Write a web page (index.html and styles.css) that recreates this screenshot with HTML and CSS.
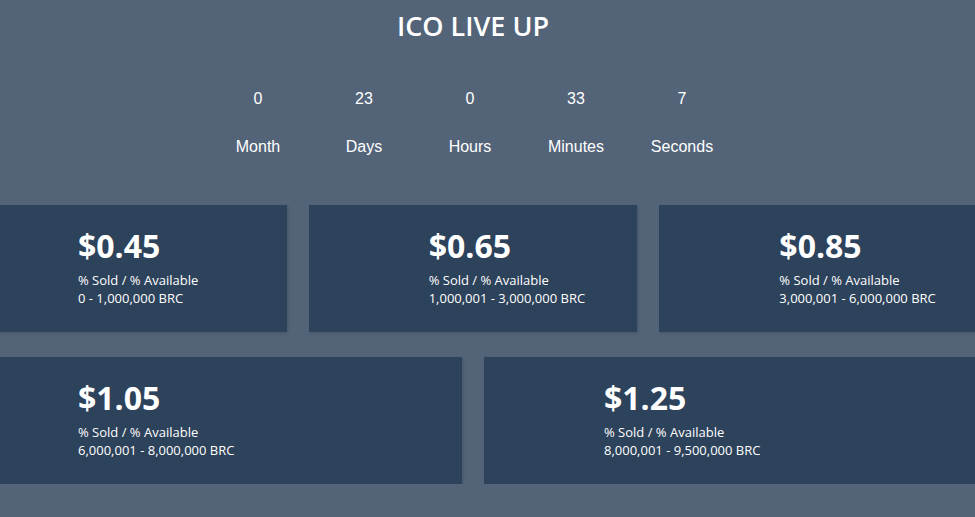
FILE: index.html
```html
<!DOCTYPE html>
<html lang="en">
<head>
  <meta charset="UTF-8">
  <title>ICO Live Up</title>
  <meta name="viewport" content="width=device-width, initial-scale=1.0">
  <link rel="stylesheet" href="styles.css">
</head>
<body>

  <div class="page">
    <h1 class="title">ICO LIVE UP</h1>

    <div class="countdown">
      <div class="unit"><span class="num">0</span><span class="label">Month</span></div>
      <div class="unit"><span class="num">23</span><span class="label">Days</span></div>
      <div class="unit"><span class="num">0</span><span class="label">Hours</span></div>
      <div class="unit"><span class="num">33</span><span class="label">Minutes</span></div>
      <div class="unit"><span class="num">7</span><span class="label">Seconds</span></div>
    </div>

    <div class="tiers three">
      <div class="tier">
        <div class="price">$0.45</div>
        <p>% Sold / % Available</p>
        <p>0 - 1,000,000 BRC</p>
      </div>
      <div class="tier">
        <div class="price">$0.65</div>
        <p>% Sold / % Available</p>
        <p>1,000,001 - 3,000,000 BRC</p>
      </div>
      <div class="tier">
        <div class="price">$0.85</div>
        <p>% Sold / % Available</p>
        <p>3,000,001 - 6,000,000 BRC</p>
      </div>
    </div>

    <div class="tiers two">
      <div class="tier">
        <div class="price">$1.05</div>
        <p>% Sold / % Available</p>
        <p>6,000,001 - 8,000,000 BRC</p>
      </div>
      <div class="tier">
        <div class="price">$1.25</div>
        <p>% Sold / % Available</p>
        <p>8,000,001 - 9,500,000 BRC</p>
      </div>
    </div>
  </div>

</body>
</html>
```

FILE: styles.css
```css
html, body {
  margin: 0;
  overflow: hidden;
}
body {
  background: #536479;
  color: #fff;
  font-family: "Open Sans", "Liberation Sans", sans-serif;
}
.page {
  width: 946px;
  padding-top: 10px;
}
.title {
  margin: 0;
  font-size: 27px;
  font-weight: 600;
  line-height: 31px;
  text-align: center;
}
.countdown {
  display: flex;
  justify-content: center;
  margin-top: 49px;
  padding-right: 6px;
  font-family: "Liberation Sans", Arial, sans-serif;
  font-size: 16px;
  line-height: 18px;
}
.unit {
  width: 106px;
  display: flex;
  flex-direction: column;
  align-items: center;
  gap: 30px;
}
.tiers {
  display: grid;
  gap: 22px;
  margin: 0 -42px;
}
.three {
  grid-template-columns: repeat(3, 1fr);
  margin-top: 49px;
}
.two {
  grid-template-columns: repeat(2, 1fr);
  margin-top: 25px;
}
.tier {
  background: #2d425b;
  height: 127px;
  box-sizing: border-box;
  padding: 22px 0 0 120px;
  box-shadow: 1px 1px 3px rgba(0, 0, 0, 0.15);
}
.price {
  font-size: 32px;
  font-weight: 700;
  line-height: 38px;
  margin-bottom: 6px;
}
.tier p {
  margin: 0;
  font-size: 13px;
  line-height: 18.3px;
}
```
